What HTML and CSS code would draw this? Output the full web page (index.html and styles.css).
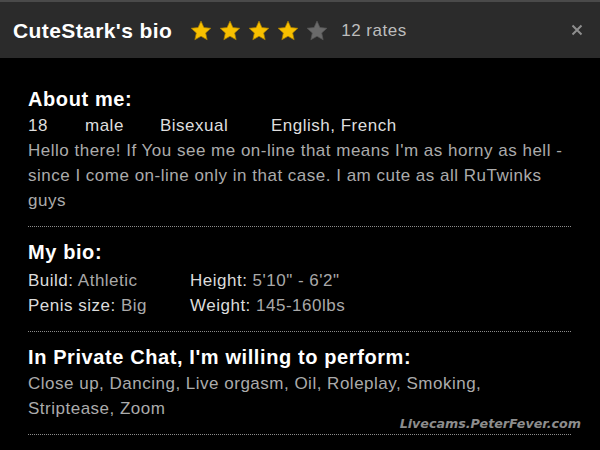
FILE: index.html
```html
<!DOCTYPE html>
<html>
<head>
<meta charset="utf-8">
<link rel="stylesheet" href="styles.css">
</head>
<body>
<div class="panel">
  <div class="header">
    <div class="title">CuteStark's bio</div>
    <div class="stars">
      <svg class="star on" viewBox="0 0 24 24"><path d="M12 1.2l3.2 7 7.6.8-5.7 5.1 1.6 7.5L12 17.7l-6.7 3.9 1.6-7.5L1.2 9l7.6-.8z"/></svg>
      <svg class="star on" viewBox="0 0 24 24"><path d="M12 1.2l3.2 7 7.6.8-5.7 5.1 1.6 7.5L12 17.7l-6.7 3.9 1.6-7.5L1.2 9l7.6-.8z"/></svg>
      <svg class="star on" viewBox="0 0 24 24"><path d="M12 1.2l3.2 7 7.6.8-5.7 5.1 1.6 7.5L12 17.7l-6.7 3.9 1.6-7.5L1.2 9l7.6-.8z"/></svg>
      <svg class="star on" viewBox="0 0 24 24"><path d="M12 1.2l3.2 7 7.6.8-5.7 5.1 1.6 7.5L12 17.7l-6.7 3.9 1.6-7.5L1.2 9l7.6-.8z"/></svg>
      <svg class="star off" viewBox="0 0 24 24"><path d="M12 1.2l3.2 7 7.6.8-5.7 5.1 1.6 7.5L12 17.7l-6.7 3.9 1.6-7.5L1.2 9l7.6-.8z"/></svg>
    </div>
    <div class="rates">12 rates</div>
    <svg class="close" viewBox="0 0 12 12"><path d="M1.5 1.5l9 9M10.5 1.5l-9 9"/></svg>
  </div>
  <div class="content">
    <div class="section">
      <div class="heading">About me:</div>
      <div class="facts">
        <span>18</span><span>male</span><span>Bisexual</span><span>English, French</span>
      </div>
      <p class="text">Hello there! If You see me on-line that means I'm as horny as hell - since I come on-line only in that case. I am cute as all RuTwinks guys</p>
    </div>
    <div class="section">
      <div class="heading">My bio:</div>
      <div class="bio">
        <div><span class="label">Build:</span> <span class="val">Athletic</span></div>
        <div><span class="label">Height:</span> <span class="val">5'10" - 6'2"</span></div>
        <div><span class="label">Penis size:</span> <span class="val">Big</span></div>
        <div><span class="label">Weight:</span> <span class="val">145-160lbs</span></div>
      </div>
    </div>
    <div class="section">
      <div class="heading">In Private Chat, I'm willing to perform:</div>
      <p class="text perform">Close up, Dancing, Live orgasm, Oil, Roleplay, Smoking, Striptease, Zoom</p>
    </div>
  </div>
  <div class="watermark">Livecams.PeterFever.com</div>
</div>
</body>
</html>
```
FILE: styles.css
```css
html, body {
  margin: 0;
  padding: 0;
  background: #000;
}
.panel {
  position: relative;
  width: 600px;
  height: 450px;
  overflow: hidden;
  background: #000;
  font-family: "Liberation Sans", Arial, sans-serif;
}
.header {
  box-sizing: border-box;
  height: 58px;
  border-top: 2px solid #4a4a4a;
  background: #2b2b2b;
  display: flex;
  align-items: center;
  padding: 2px 0 0 13px;
}
.title {
  color: #fff;
  font-weight: bold;
  font-size: 21px;
  letter-spacing: 0.4px;
}
.stars {
  display: flex;
  gap: 7px;
  margin-left: 18px;
}
.star {
  width: 22px;
  height: 22px;
  display: block;
}
.star.on path {
  fill: #f8c000;
  stroke: #a57a00;
  stroke-width: 0.8;
  stroke-linejoin: round;
}
.star.off path {
  fill: #6a6a6a;
  stroke: #555;
  stroke-width: 0.8;
  stroke-linejoin: round;
}
.rates {
  color: #bdbdbd;
  font-size: 17px;
  letter-spacing: 0.5px;
  margin-left: 13px;
}
.close {
  width: 12px;
  height: 12px;
  margin-left: auto;
  margin-right: 17px;
  margin-bottom: 2px;
}
.close path {
  stroke: #8e8e8e;
  stroke-width: 2;
  fill: none;
}
.content {
  padding: 16px 29px 0 28px;
}
.section {
  padding: 13px 0 13px;
  border-bottom: 1px dotted #8c8c8c;
}
.heading {
  color: #fff;
  font-weight: bold;
  font-size: 20px;
  letter-spacing: 0.6px;
  line-height: 25px;
  margin-bottom: 1px;
}
.facts {
  display: grid;
  grid-template-columns: 57px 75px 111px auto;
  color: #dedede;
  font-size: 17px;
  letter-spacing: 0.5px;
  line-height: 25px;
}
.text {
  margin: 0;
  color: #ababab;
  font-size: 17px;
  letter-spacing: 0.5px;
  line-height: 25px;
}
.text.perform {
  height: 44px;
  margin-bottom: 6px;
}
.bio {
  display: grid;
  grid-template-columns: 162px auto;
  font-size: 17px;
  letter-spacing: 0.5px;
  line-height: 25px;
  margin-top: 3px;
}
.label {
  color: #dcdcdc;
}
.val {
  color: #a9a9a9;
}
.watermark {
  position: absolute;
  right: 19px;
  top: 419px;
  line-height: 10px;
  color: #8d8d8d;
  font-family: "DejaVu Sans", Verdana, sans-serif;
  font-weight: bold;
  font-style: italic;
  font-size: 12.7px;
  text-shadow: 1px 1px 0 #000;
}
```
